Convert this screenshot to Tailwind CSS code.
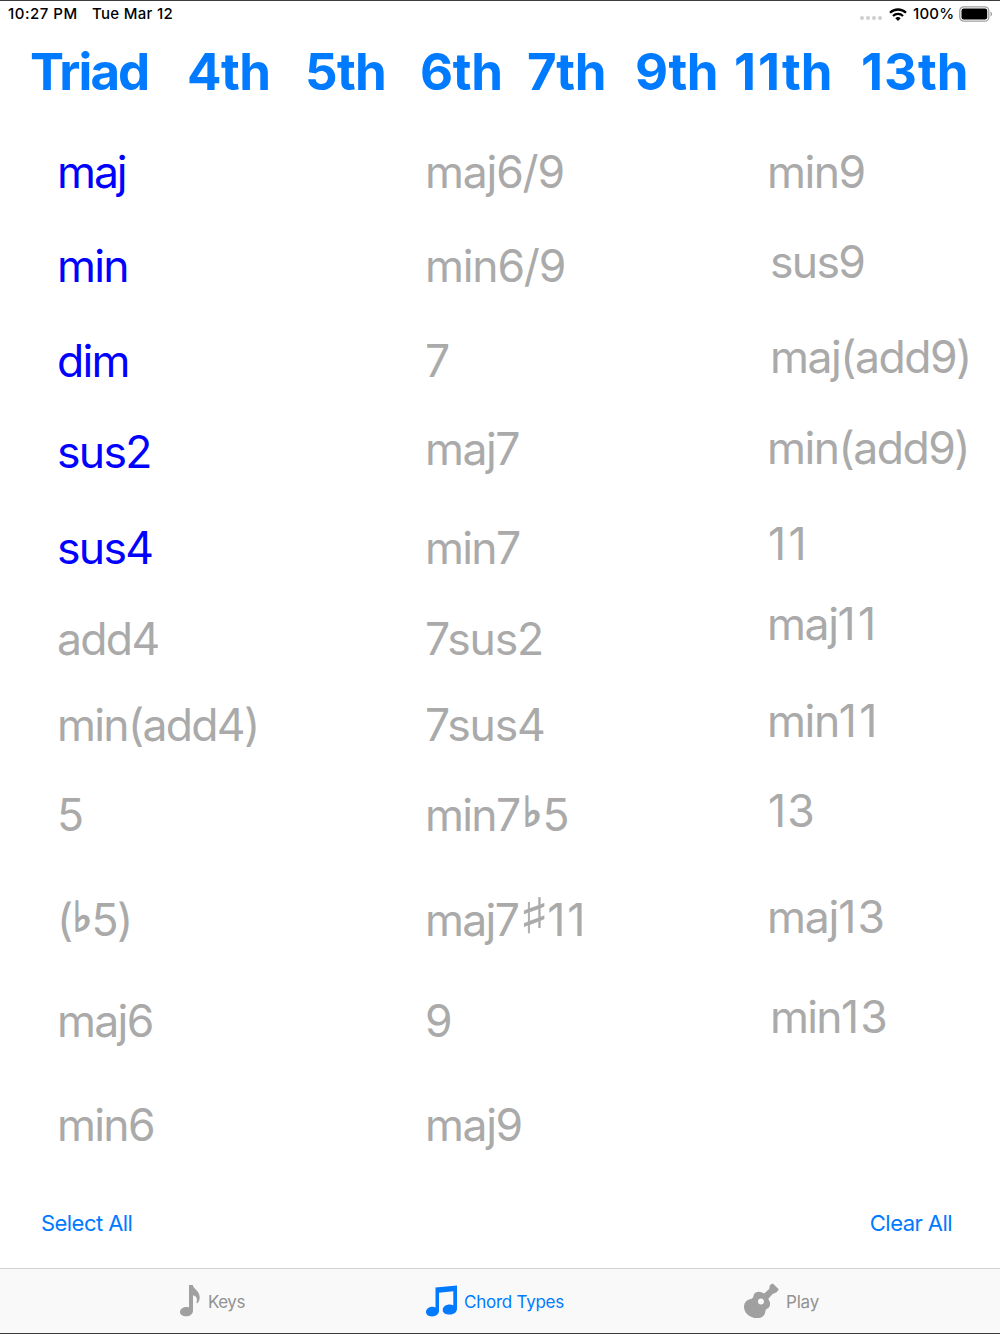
<!DOCTYPE html>
<html lang="en">
<head>
    <meta charset="UTF-8">
    <meta name="viewport" content="width=device-width, initial-scale=1.0">
    <title>Chord Types</title>
    <script src="https://cdn.jsdelivr.net/npm/@tailwindcss/browser@4"></script>
</head>
<body class="bg-white font-['Inter',sans-serif]">

    <div class="flex flex-col w-[1000px] h-[1334px] overflow-hidden border-t border-b border-[#3c3c3e]">

        <!-- Status bar -->
        <header class="flex items-center justify-between h-[26px] pl-2 pr-[7px] text-[15px] leading-[26px] font-medium text-black">
            <div class="flex whitespace-nowrap">
                <span class="w-[84px] tracking-[0.5px]">10:27 PM</span>
                <span class="tracking-[0.3px]">Tue Mar 12</span>
            </div>
            <div class="flex items-center">
                <svg class="mt-2 mr-[7px]" width="22" height="4" viewBox="0 0 22 4" fill="#cfcfcf"><circle cx="2" cy="2" r="2"/><circle cx="8" cy="2" r="2"/><circle cx="14" cy="2" r="2"/><circle cx="20" cy="2" r="2"/></svg>
                <svg class="mr-[6px]" width="18" height="13" viewBox="0 0 18 13" fill="none" stroke="#000" stroke-width="2.3"><path d="M1 4.800a11.400 11.400 0 0 1 16 0"/><path d="M4 8a7.100 7.100 0 0 1 10 0"/><path d="M9 13L6.300 10.200a3.900 3.900 0 0 1 5.400 0z" fill="#000" stroke="none"/></svg>
                <span class="w-[46px] tracking-[0.2px]">100%</span>
                <svg width="34" height="16" viewBox="0 0 34 16"><rect x=".8" y=".8" width="29" height="14.4" rx="4" fill="none" stroke="#a0a0a0" stroke-width="1.3"/><rect x="2.5" y="2.6" width="25.7" height="10.8" rx="2.2"/><path d="M31.500 5.500c2 .8 2 4.200 0 5z" fill="#a0a0a0"/></svg>
            </div>
        </header>

        <!-- Chord groups -->
        <nav class="flex h-[117px] pt-[15px] pl-[30px] text-[51px] leading-[60px] font-bold text-[#007aff] whitespace-nowrap">
            <button class="w-[157px] text-left h-[60px] tracking-[-1.9px]">Triad</button>
            <button class="w-[118px] text-left h-[60px] tracking-[-0.5px]">4th</button>
            <button class="w-[115px] text-left h-[60px] tracking-[-0.7px]">5th</button>
            <button class="w-[107px] text-left h-[60px] tracking-[-0.3px]">6th</button>
            <button class="w-[108px] text-left h-[60px] tracking-[-0.4px]">7th</button>
            <button class="w-[99px] text-left h-[60px] tracking-[-0.5px]">9th</button>
            <button class="w-[127px] text-left h-[60px]"><span class="tracking-[2px]">11</span>th</button>
            <button class="text-left h-[60px]"><span class="tracking-[1px]">13</span>th</button>
        </nav>

        <!-- Chord types -->
        <main class="grid grid-cols-[368px_342px_1fr] h-[1053px] pl-[57px] text-[44.5px] leading-[56px] tracking-[-1.7px] text-[#aaaaaa] whitespace-nowrap">
            <ul>
                <li class="h-[94px] text-[#0000ff] tracking-[-2.1px]">maj</li>
                <li class="h-[95px] text-[#0000ff]">min</li>
                <li class="h-[91px] text-[#0000ff]">dim</li>
                <li class="h-[96px] text-[#0000ff]">sus2</li>
                <li class="h-[91px] text-[#0000ff]">sus4</li>
                <li class="h-[86px]">add4</li>
                <li class="h-[90px]">min(add4)</li>
                <li class="h-[105px]">5</li>
                <li class="h-[101px]">(<span class="inline-block w-[20px] h-[56px] align-top pl-px -mt-[3px] font-['DejaVu_Sans'] text-[41px] [-webkit-text-stroke:1.8px]">♭</span>5)</li>
                <li class="h-[104px]">maj6</li>
                <li>min6</li>
            </ul>
            <ul>
                <li class="h-[94px] tracking-[-1.2px]">maj6/9</li>
                <li class="h-[95px] tracking-[-1.2px]">min6/9</li>
                <li class="h-[88px]">7</li>
                <li class="h-[99px] tracking-[-1.5px]">maj7</li>
                <li class="h-[91px] tracking-[-1.7px]">min7</li>
                <li class="h-[86px] tracking-[-1.2px]">7sus2</li>
                <li class="h-[90px] tracking-[-1.2px]">7sus4</li>
                <li class="h-[105px]">min7<span class="inline-block w-[23px] h-[56px] align-top pl-[3px] -mt-[3px] font-['DejaVu_Sans'] text-[41px] [-webkit-text-stroke:1.8px]">♭</span>5</li>
                <li class="h-[101px]">maj7<span class="inline-block w-[29px] h-[56px] align-top pl-px -mt-[3px]"><span class="inline-block origin-left scale-x-130 font-['DejaVu_Sans'] text-[49px] [-webkit-text-stroke:0.3px]">♯</span></span><span class="tracking-[2px]">11</span></li>
                <li class="h-[104px]">9</li>
                <li class="tracking-[-1.4px]">maj9</li>
            </ul>
            <ul>
                <li class="h-[90px] tracking-[-1.5px]">min9</li>
                <li class="h-[95px] pl-[3px]">sus9</li>
                <li class="h-[91px] pl-[3px] tracking-[-1.5px]">maj(add9)</li>
                <li class="h-[96px] tracking-[-1.5px]">min(add9)</li>
                <li class="h-[80px] pl-px tracking-[2.3px]">11</li>
                <li class="h-[97px] tracking-[-1.4px]">maj<span class="tracking-[2.3px]">11</span></li>
                <li class="h-[90px] tracking-[-1.4px]">min<span class="tracking-[2.3px]">11</span></li>
                <li class="h-[106px] pl-px tracking-[1.2px]">13</li>
                <li class="h-[100px] tracking-[-1.2px]">maj<span class="tracking-[1.2px]">13</span></li>
                <li class="pl-[3px]">min<span class="tracking-[1.2px]">13</span></li>
            </ul>
        </main>

        <div class="flex justify-between flex-1 pt-3 pl-[41px] pr-12 text-[22px] leading-[28px] tracking-[-0.55px] text-[#007aff]">
            <button class="h-7">Select All</button>
            <button class="h-7">Clear All</button>
        </div>

        <!-- Tab bar -->
        <footer class="flex h-[65px] shrink-0 border-t border-[#d2d2d2] bg-[#f9f9f9] pl-[179px] text-[17px] leading-[64px] text-[#929292] whitespace-nowrap">
            <div class="flex items-center w-[247px]">
                <svg class="mr-[7px]" width="22" height="34" viewBox="0 0 22 34" fill="#a0a0a0"><path d="M10 1h3.800c.2 3.500 6.900 6 6.900 12 0 3-.9 4.800-2.300 6.300l-1-.5c1.300-3.500.5-6.600-3.400-7.600V26.500c0 3.500-3 5.800-7 5.800-3.500 0-6-1.500-6-4.200 0-3 3.200-5 6.500-5 .9 0 1.700.1 2.500.4z"/></svg>
                <span class="mt-px tracking-[-0.5px]">Keys</span>
            </div>
            <div class="flex items-center w-[318px] text-[#007aff]">
                <svg class="mr-[6px]" width="32" height="34" viewBox="0 0 32 34" fill="#007aff"><path d="M9.500 3.500L31 1.500V24.500c0 3.700-3 6-7.300 6-4 0-7-1.600-7-4.600 0-3.200 3.300-5.400 7-5.400 1.300 0 2.500.2 3.600.7V7.300L13 8.800V26.600c0 3.600-3 5.900-7 5.900-3.600 0-6-1.700-6-4.400 0-3.100 3.100-5.300 6.500-5.300 1.100 0 2.100.2 3 .6z"/></svg>
                <span class="mt-px tracking-[-0.25px]">Chord Types</span>
            </div>
            <div class="flex items-center">
                <svg class="mr-[6px]" width="36" height="36" viewBox="0 0 36 36" fill="#a0a0a0"><path fill-rule="evenodd" d="M.4 26.500c-1.300-5 .6-9 5.400-10.300 2.800-.7 3.300-1.200 3.800-3.700.8-3.500 4.900-4.500 8.500-3 .7.300 1.500.7 2.100.9L25.200 6l.7-3.900L28.800.6l6 5.600-2.100 3-4.100 1.700-4.400 5c2.900 3.900 2.400 8.200-1.100 9.900-1.300.6-1.600 1.300-1.800 3-.5 4.300-4.200 6.500-8.700 6.300C6.500 34.900 1.800 31.500.4 26.500zM17 15.600a3 3 0 1 0 0 6 3 3 0 0 0 0-6z"/></svg>
                <span class="mt-px tracking-[-0.2px]">Play</span>
            </div>
        </footer>
    </div>

</body>
</html>
